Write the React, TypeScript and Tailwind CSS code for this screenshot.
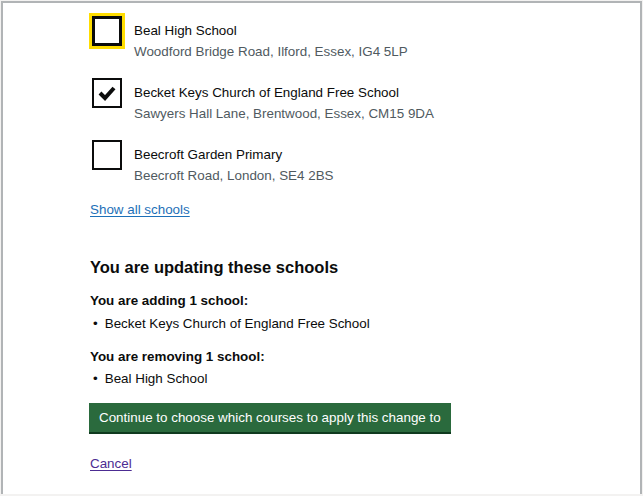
import React from 'react'

type School = {
  name: string
  address: string
  checked?: boolean
  focused?: boolean
}

const schools: School[] = [
  { name: 'Beal High School', address: 'Woodford Bridge Road, Ilford, Essex, IG4 5LP', focused: true },
  { name: 'Becket Keys Church of England Free School', address: 'Sawyers Hall Lane, Brentwood, Essex, CM15 9DA', checked: true },
  { name: 'Beecroft Garden Primary', address: 'Beecroft Road, London, SE4 2BS' },
]

function Checkbox({ checked, focused }: { checked?: boolean; focused?: boolean }) {
  return (
    <div
      className={
        focused
          ? 'w-[30px] h-[30px] shrink-0 border-[3px] border-[#0b0c0c] outline-[3px] outline-solid outline-[#ffdd00] bg-white'
          : 'w-[30px] h-[30px] shrink-0 border-2 border-[#0b0c0c] bg-white flex items-center justify-center'
      }
    >
      {checked && (
        <svg width="20" height="16" viewBox="0 0 20 16">
          <polyline points="3,8 8,13 17,3" fill="none" stroke="#0b0c0c" strokeWidth="4" />
        </svg>
      )}
    </div>
  )
}

function App() {
  return (
    <div className="w-[643px] h-[496px] bg-[#f3f2f1] font-['Liberation_Sans',Arial,sans-serif] text-[#0b0c0c] overflow-hidden">
      <div className="ml-px mt-px w-[641px] h-[493px] bg-white border-2 border-b-0 border-[#b1b4b6] pl-[87px] pt-[13px]">
        {/* checkboxes */}
        <div className="flex flex-col ml-[2px]">
          {schools.map((s) => (
            <div key={s.name} className="h-[62px] flex items-start gap-3">
              <Checkbox checked={s.checked} focused={s.focused} />
              <div className="pt-[5px]">
                <div className="text-[13.4px] leading-[20px]">{s.name}</div>
                <div className="text-[13.4px] leading-[20px] mt-px text-[#505a5f]">{s.address}</div>
              </div>
            </div>
          ))}
        </div>
        <a href="#" className="block text-[13.4px] leading-[20px] text-[#1d70b8] underline underline-offset-2 w-fit -mt-[2px]">
          Show all schools
        </a>

        {/* summary */}
        <h2 className="mt-[35px] text-[16.5px] leading-[24px] font-bold">You are updating these schools</h2>
        <div className="mt-[12px] text-[13.4px] leading-[20px] font-bold">You are adding 1 school:</div>
        <ul className="mt-[3px] text-[13.4px] leading-[20px]">
          <li className="flex gap-[7px] pl-[3px]">
            <span>•</span>
            <span>Becket Keys Church of England Free School</span>
          </li>
        </ul>
        <div className="mt-[13px] text-[13.4px] leading-[20px] font-bold">You are removing 1 school:</div>
        <ul className="mt-[2px] text-[13.4px] leading-[20px]">
          <li className="flex gap-[7px] pl-[3px]">
            <span>•</span>
            <span>Beal High School</span>
          </li>
        </ul>

        <button className="-ml-px mt-[14px] h-[29px] px-[10px] bg-[#2a6a3d] text-white text-[13.4px] leading-[20px] shadow-[0_2px_0_#0f3a1f]">
          Continue to choose which courses to apply this change to
        </button>

        <a href="#" className="block mt-[22px] text-[13.4px] leading-[20px] text-[#4c2c92] underline underline-offset-2 w-fit">
          Cancel
        </a>
      </div>
    </div>
  )
}

export default App
